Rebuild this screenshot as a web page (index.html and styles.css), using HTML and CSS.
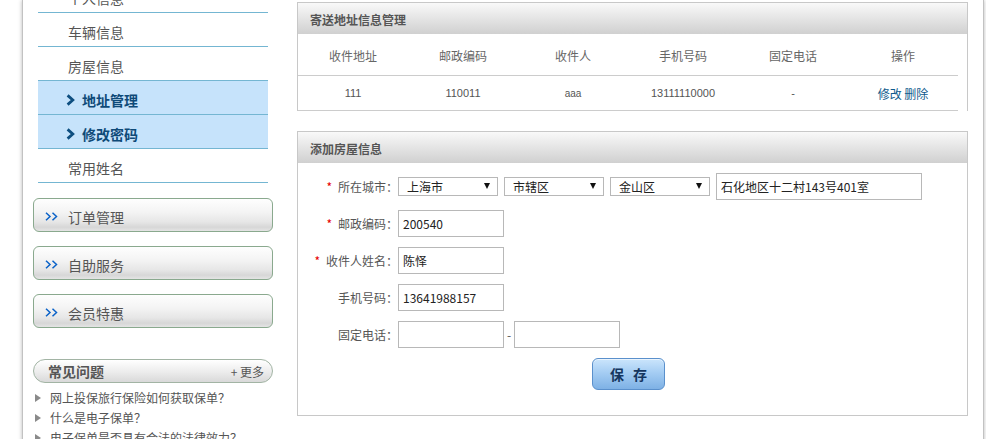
FILE: index.html
```html
<!DOCTYPE html>
<html lang="zh-CN">
<head>
<meta charset="utf-8">
<title>地址管理</title>
<link rel="stylesheet" href="styles.css">
</head>
<body>
<div class="page">
  <aside class="sidebar">
    <ul class="menu">
      <li class="menu-item">个人信息</li>
      <li class="menu-item">车辆信息</li>
      <li class="menu-item">房屋信息</li>
      <li class="menu-item active"><svg class="chev" viewBox="0 0 9 12" width="9" height="12"><path d="M1.6 1.4 L6.8 6 L1.6 10.6"/></svg>地址管理</li>
      <li class="menu-item active"><svg class="chev" viewBox="0 0 9 12" width="9" height="12"><path d="M1.6 1.4 L6.8 6 L1.6 10.6"/></svg>修改密码</li>
      <li class="menu-item">常用姓名</li>
    </ul>
    <div class="nav-buttons">
      <a class="nav-btn" href="#"><svg class="dbl" viewBox="0 0 13 9" width="13" height="9"><path d="M1 0.8 L5 4.5 L1 8.2 M7.5 0.8 L11.5 4.5 L7.5 8.2"/></svg>订单管理</a>
      <a class="nav-btn" href="#"><svg class="dbl" viewBox="0 0 13 9" width="13" height="9"><path d="M1 0.8 L5 4.5 L1 8.2 M7.5 0.8 L11.5 4.5 L7.5 8.2"/></svg>自助服务</a>
      <a class="nav-btn" href="#"><svg class="dbl" viewBox="0 0 13 9" width="13" height="9"><path d="M1 0.8 L5 4.5 L1 8.2 M7.5 0.8 L11.5 4.5 L7.5 8.2"/></svg>会员特惠</a>
    </div>
    <div class="faq">
      <div class="faq-head"><span class="faq-title">常见问题</span><span class="faq-more">+&nbsp;更多</span></div>
      <ul class="faq-list">
        <li>网上投保旅行保险如何获取保单？</li>
        <li>什么是电子保单？</li>
        <li>电子保单是否具有合法的法律效力？</li>
      </ul>
    </div>
  </aside>
  <main class="content">
    <section class="panel panel-list">
      <div class="panel-head">寄送地址信息管理</div>
      <table class="addr-table">
        <thead>
          <tr><th>收件地址</th><th>邮政编码</th><th>收件人</th><th>手机号码</th><th>固定电话</th><th>操作</th></tr>
        </thead>
        <tbody>
          <tr><td>111</td><td>110011</td><td class="small">aaa</td><td>13111110000</td><td>-</td><td class="ops"><a href="#">修改</a>&nbsp;<a href="#">删除</a></td></tr>
        </tbody>
      </table>
    </section>
    <section class="panel panel-form">
      <div class="panel-head">添加房屋信息</div>
      <form class="form">
        <div class="row">
          <label class="label"><span class="req">*</span>所在城市：</label>
          <span class="select"><select><option>上海市</option></select></span>
          <span class="select"><select><option>市辖区</option></select></span>
          <span class="select"><select><option>金山区</option></select></span>
          <input class="input input-wide" type="text" value="石化地区十二村143号401室">
        </div>
        <div class="row">
          <label class="label"><span class="req">*</span>邮政编码：</label>
          <input class="input" type="text" value="200540">
        </div>
        <div class="row">
          <label class="label"><span class="req">*</span>收件人姓名：</label>
          <input class="input" type="text" value="陈怿">
        </div>
        <div class="row">
          <label class="label">手机号码：</label>
          <input class="input" type="text" value="13641988157">
        </div>
        <div class="row">
          <label class="label">固定电话：</label>
          <input class="input" type="text" value="">
          <span class="dash">-</span>
          <input class="input" type="text" value="">
        </div>
        <div class="actions">
          <button class="save" type="button">保 存</button>
        </div>
      </form>
    </section>
  </main>
</div>
</body>
</html>
```

FILE: styles.css
```css
* { box-sizing: border-box; }
html, body { margin: 0; padding: 0; background: #fff; overflow: hidden; }
body {
  font-family: "Noto Sans CJK SC", "Liberation Sans", sans-serif;
  font-size: 12px;
  color: #555;
}
.page {
  margin-left: 22px;
  width: 962px;
  min-height: 480px;
  border-left: 1px solid #c2c2c2;
  border-right: 1px solid #c2c2c2;
  box-shadow: 0 0 4px rgba(0, 0, 0, 0.28);
  display: flex;
  gap: 24px;
  padding: 0 15px 0 10px;
}
.sidebar { width: 240px; flex: none; }

.menu { list-style: none; margin: -21px 5px 0 5px; padding: 0; }
.menu-item {
  height: 34px;
  border-bottom: 1px solid #74b6d2;
  padding: 5px 0 0 30px;
  line-height: 28px;
  font-size: 14px;
  color: #555;
}
.menu-item.active {
  background: #c6e3fb;
  color: #0e4a78;
  font-weight: bold;
  padding-left: 28px;
  display: flex;
  align-items: center;
}
.chev { margin-right: 7px; flex: none; }
.chev path { fill: none; stroke: #0e4f80; stroke-width: 2.8; }

.nav-buttons { margin-top: 15px; display: flex; flex-direction: column; gap: 14px; }
.nav-btn {
  height: 34px;
  border: 1px solid #8aa98e;
  border-radius: 6px;
  background: linear-gradient(#fefefe 0%, #f4f4f4 40%, #e6e6e6 72%, #d7d7d7 88%, #e4e4e4 100%);
  display: flex;
  align-items: center;
  padding: 3px 0 0 11px;
  font-size: 14px;
  color: #555;
  text-decoration: none;
}
.dbl { margin-right: 10px; flex: none; }
.dbl path { fill: none; stroke: #0a62c8; stroke-width: 1.5; }

.faq { margin-top: 31px; }
.faq-head {
  height: 24px;
  border: 1px solid #a2b4a4;
  border-radius: 12px;
  background: linear-gradient(#ffffff, #ececec 55%, #d9d9d9);
  display: flex;
  justify-content: space-between;
  align-items: center;
  padding: 0 8px 0 14px;
}
.faq-title { font-size: 14px; font-weight: bold; color: #555; }
.faq-more { font-size: 12px; color: #555; }
.faq-list { list-style: none; margin: 5px 0 0; padding: 0 0 0 2px; }
.faq-list li {
  position: relative;
  padding-left: 15px;
  line-height: 20px;
  font-size: 12px;
  color: #555;
}
.faq-list li::before {
  content: "";
  position: absolute;
  left: 0;
  top: 6px;
  border-left: 6px solid #8a8a8a;
  border-top: 4px solid transparent;
  border-bottom: 4px solid transparent;
}

.content { width: 671px; flex: none; padding-top: 2px; }
.panel { border: 1px solid #c8c8c8; background: #fff; }
.panel-list { border-bottom: none; }
.panel-form { margin-top: 20px; }
.panel-head {
  height: 31px;
  background: linear-gradient(#f9f9f9, #d0d0d0);
  padding: 2px 0 0 12px;
  line-height: 29px;
  font-size: 12px;
  font-weight: bold;
  color: #555;
}

.addr-table { width: 660px; border-collapse: separate; border-spacing: 0; }
.addr-table th, .addr-table td { width: 110px; text-align: center; padding: 0; }
.addr-table th {
  height: 42px;
  padding-top: 2px;
  border-bottom: 1px solid #cccccc;
  font-weight: normal;
  font-size: 12px;
  color: #666;
}
.addr-table td {
  height: 35px;
  border-bottom: 1px solid #cccccc;
  font-family: "Liberation Sans", "Noto Sans CJK SC", sans-serif;
  font-size: 11px;
  color: #555;
}
.addr-table td.small { font-size: 10px; }
.addr-table td.ops { font-family: "Noto Sans CJK SC", sans-serif; font-size: 12px; }
.ops a { color: #0e5a8c; text-decoration: none; }

.form { padding: 10px 0 25px; display: flex; flex-direction: column; gap: 10px; margin: 0; }
.row { display: flex; align-items: center; height: 27px; }
.label { width: 100px; flex: none; text-align: right; font-size: 12px; color: #555; }
.req { color: #e60000; margin-right: 6px; }
.select {
  position: relative;
  width: 100px;
  height: 19px;
  border: 1px solid #b8b8b8;
  margin-right: 6px;
  flex: none;
}
.select::after {
  content: "";
  position: absolute;
  right: 7px;
  top: 5px;
  border-top: 6px solid #111;
  border-left: 3px solid transparent;
  border-right: 3px solid transparent;
  pointer-events: none;
}
.select select {
  -webkit-appearance: none;
  appearance: none;
  width: 100%;
  height: 100%;
  border: 0;
  background: transparent;
  padding: 0 0 0 8px;
  font-family: "Noto Sans CJK SC", sans-serif;
  font-size: 12px;
  color: #222;
  outline: none;
}
.input {
  width: 106px;
  height: 27px;
  flex: none;
  border: 1px solid #b8b8b8;
  padding: 0 4px;
  font-family: "Noto Sans CJK SC", "Liberation Sans", sans-serif;
  font-size: 12px;
  color: #222;
  outline: none;
  margin: 0;
}
.input-wide { width: 206px; }
.dash { width: 10px; text-align: center; color: #555; }
.actions { padding-left: 294px; }
.save {
  width: 73px;
  height: 32px;
  border: 1px solid #5a90cc;
  border-radius: 6px;
  background: linear-gradient(#cbe5fc, #a5cdf3 45%, #7eb1e5 100%);
  box-shadow: inset 0 1px 0 rgba(255, 255, 255, 0.6);
  font-family: "Noto Sans CJK SC", sans-serif;
  font-size: 14px;
  font-weight: bold;
  letter-spacing: 3px;
  text-indent: 3px;
  color: #15365f;
  padding: 0;
}
```
